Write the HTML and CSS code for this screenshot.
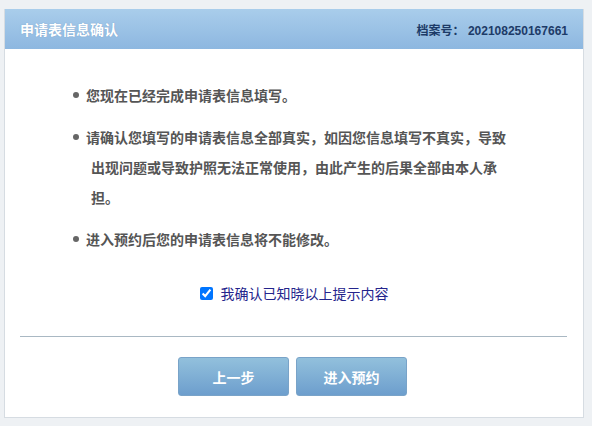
FILE: index.html
```html
<!DOCTYPE html>
<html lang="zh-CN">
<head>
<meta charset="UTF-8">
<meta name="viewport" content="width=device-width, initial-scale=1.0">
<title>申请表信息确认</title>
<link rel="stylesheet" href="styles.css">
</head>
<body>
<div class="panel">
    <div class="panel-head">
        <span class="panel-title">申请表信息确认</span>
        <span class="file-no">档案号：&nbsp;202108250167661</span>
    </div>

    <!-- 提示内容 -->
    <ul class="notice-list">
        <li>您现在已经完成申请表信息填写。</li>
        <li>请确认您填写的申请表信息全部真实，如因您信息填写不真实，导致出现问题或导致护照无法正常使用，由此产生的后果全部由本人承担。</li>
        <li>进入预约后您的申请表信息将不能修改。</li>
    </ul>

    <div class="confirm-row">
        <input type="checkbox" id="confirm" checked>
        <label for="confirm">我确认已知晓以上提示内容</label>
    </div>

    <div class="divider"></div>

    <div class="btn-row">
        <button class="btn">上一步</button>
        <button class="btn">进入预约</button>
    </div>
</div>
</body>
</html>
```

FILE: styles.css
```css
body {
    margin: 0;
    padding: 9px 8px 8px 4px;
    background-color: #eef1f4;
    font-family: "Noto Sans CJK SC", "Liberation Sans", sans-serif;
}

.panel {
    width: 578px;
    height: 408px;
    background-color: #fff;
    border: 1px solid #d6dce2;
    border-top: none;
    box-sizing: content-box;
}

.panel-head {
    display: flex;
    justify-content: space-between;
    align-items: center;
    height: 40px;
    padding: 0 15px 0 15px;
    background: linear-gradient(#a9cdeb, #8db7e0);
}

.panel-title {
    color: #fff;
    font-size: 14px;
    font-weight: bold;
    text-shadow: 0 0 1px rgba(80, 120, 170, 0.6);
}

.file-no {
    color: #1d3b68;
    font-size: 12px;
    font-weight: bold;
    font-family: "Liberation Sans", "Noto Sans CJK SC", sans-serif;
}

.notice-list {
    margin: 31px 0 0 0;
    padding: 0 72px 0 80px;
    list-style: none;
}

.notice-list li {
    position: relative;
    margin-bottom: 12px;
    padding-left: 6px;
    text-indent: -5px;
    color: #555;
    font-size: 14px;
    font-weight: bold;
    line-height: 30px;
}

.notice-list li::before {
    content: "";
    position: absolute;
    left: -12px;
    top: 12px;
    width: 6px;
    height: 6px;
    border-radius: 50%;
    background-color: #666;
}

.confirm-row {
    display: flex;
    align-items: center;
    justify-content: center;
    margin-top: 24px;
    height: 30px;
}

.confirm-row input {
    margin: 0 8px 0 0;
    width: 13px;
    height: 13px;
}

.confirm-row label {
    color: #24248c;
    font-size: 14px;
}

.divider {
    margin: 28px 16px 0 15px;
    border-top: 1px solid #a9b8c3;
}

.btn-row {
    display: flex;
    justify-content: center;
    gap: 7px;
    margin-top: 20px;
    padding-right: 3px;
}

.btn {
    width: 111px;
    height: 39px;
    border: 1px solid #79a3c8;
    border-radius: 3px;
    background: linear-gradient(#92c0dc, #6d9ecd);
    color: #fff;
    font-family: "Noto Sans CJK SC", sans-serif;
    font-size: 14px;
    font-weight: bold;
    cursor: pointer;
}
```
